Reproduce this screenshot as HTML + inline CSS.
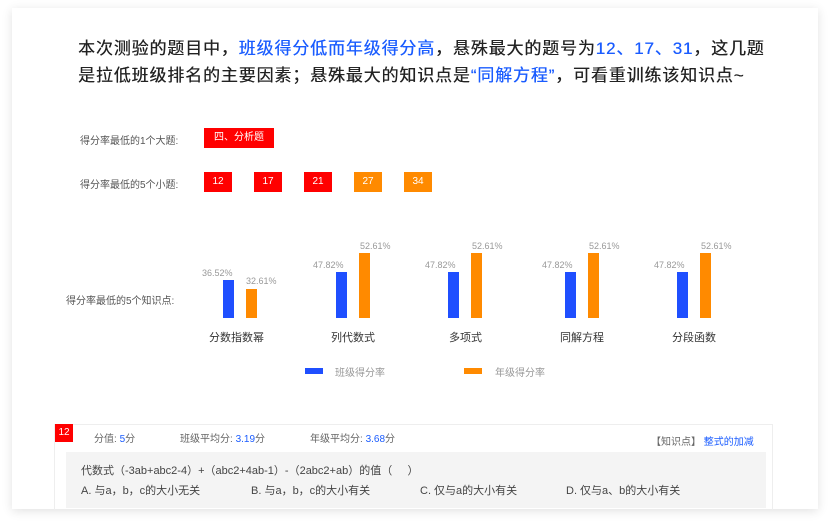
<!DOCTYPE html>
<html><head><meta charset="utf-8"><style>
*{margin:0;padding:0;box-sizing:border-box}
body{width:830px;height:527px;background:#fff;position:relative;overflow:hidden;font-family:"Liberation Sans","Noto Sans CJK SC",sans-serif;color:#333}
.card{position:absolute;left:12px;top:8px;width:806px;height:501px;background:#fff;box-shadow:0 2px 10px rgba(0,0,0,0.12)}
.a{position:absolute;white-space:nowrap}
.h{font-size:17px;color:#222;left:78px;letter-spacing:0.85px;text-shadow:0.3px 0 0 currentColor}
.b{color:#1a5cff}
.lbl{font-size:10px;color:#555}
.tag{position:absolute;height:20px;color:#fff;font-size:10px;line-height:20px;text-align:center}
.r{background:#f00}.o{background:#ff8a00}
.bar{position:absolute;width:11px}
.bl{background:#1f4fff}.or{background:#ff8a00}
.v{position:absolute;font-size:9px;color:#999}
.cat{position:absolute;font-size:11px;color:#333;top:329px}
.g{font-size:10px;color:#666}
</style></head><body>
<div class="card"></div>
<div class="a h" style="top:34px">本次测验的题目中，<span class="b">班级得分低而年级得分高</span>，悬殊最大的题号为<span class="b">12、17、31</span>，这几题</div>
<div class="a h" style="top:61px">是拉低班级排名的主要因素；悬殊最大的知识点是<span class="b">“同解方程”</span>，可看重训练该知识点~</div>

<div class="a lbl" style="left:80px;top:132px">得分率最低的1个大题:</div>
<div class="tag r" style="left:204px;top:128px;width:70px">四、分析题</div>
<div class="a lbl" style="left:80px;top:176px">得分率最低的5个小题:</div>
<div class="tag r" style="left:204px;top:172px;width:28px">12</div>
<div class="tag r" style="left:254px;top:172px;width:28px">17</div>
<div class="tag r" style="left:304px;top:172px;width:28px">21</div>
<div class="tag o" style="left:354px;top:172px;width:28px">27</div>
<div class="tag o" style="left:404px;top:172px;width:28px">34</div>

<div class="a lbl" style="left:66px;top:292px">得分率最低的5个知识点:</div>

<div class="bar bl" style="left:223px;top:280px;height:38px"></div>
<div class="bar or" style="left:246px;top:289px;height:29px"></div>
<div class="v" style="left:202px;top:268px">36.52%</div>
<div class="v" style="left:246px;top:276px">32.61%</div>
<div class="cat" style="left:209px">分数指数幂</div>

<div class="bar bl" style="left:336px;top:272px;height:46px"></div>
<div class="bar or" style="left:359px;top:253px;height:65px"></div>
<div class="v" style="left:313px;top:260px">47.82%</div>
<div class="v" style="left:360px;top:241px">52.61%</div>
<div class="cat" style="left:331px">列代数式</div>

<div class="bar bl" style="left:448px;top:272px;height:46px"></div>
<div class="bar or" style="left:471px;top:253px;height:65px"></div>
<div class="v" style="left:425px;top:260px">47.82%</div>
<div class="v" style="left:472px;top:241px">52.61%</div>
<div class="cat" style="left:449px">多项式</div>

<div class="bar bl" style="left:565px;top:272px;height:46px"></div>
<div class="bar or" style="left:588px;top:253px;height:65px"></div>
<div class="v" style="left:542px;top:260px">47.82%</div>
<div class="v" style="left:589px;top:241px">52.61%</div>
<div class="cat" style="left:560px">同解方程</div>

<div class="bar bl" style="left:677px;top:272px;height:46px"></div>
<div class="bar or" style="left:700px;top:253px;height:65px"></div>
<div class="v" style="left:654px;top:260px">47.82%</div>
<div class="v" style="left:701px;top:241px">52.61%</div>
<div class="cat" style="left:672px">分段函数</div>

<div class="a" style="left:305px;top:368px;width:18px;height:6px;background:#1f4fff"></div>
<div class="a" style="left:335px;top:364px;font-size:10px;color:#999">班级得分率</div>
<div class="a" style="left:464px;top:368px;width:18px;height:6px;background:#ff8a00"></div>
<div class="a" style="left:495px;top:364px;font-size:10px;color:#999">年级得分率</div>

<div class="a" style="left:54px;top:424px;width:719px;height:86px;border:1px solid #eee;border-bottom:none"></div>
<div class="a" style="left:55px;top:424px;width:18px;height:18px;background:#f00;color:#fff;font-size:10px;line-height:18px;text-align:center">12</div>
<div class="a g" style="left:94px;top:430px">分值: <span class="b">5</span>分</div>
<div class="a g" style="left:180px;top:430px">班级平均分: <span class="b">3.19</span>分</div>
<div class="a g" style="left:310px;top:430px">年级平均分: <span class="b">3.68</span>分</div>
<div class="a g" style="left:651px;top:433px">【知识点】 <span class="b">整式的加减</span></div>
<div class="a" style="left:66px;top:452px;width:700px;height:56px;background:#f4f4f4"></div>
<div class="a" style="left:81px;top:462px;font-size:11px;color:#444">代数式（-3ab+abc2-4）+（abc2+4ab-1）-（2abc2+ab）的值（&nbsp;&nbsp;&nbsp;&nbsp;&nbsp;）</div>
<div class="a" style="left:81px;top:482px;font-size:11px;color:#444">A. 与a，b，c的大小无关</div>
<div class="a" style="left:251px;top:482px;font-size:11px;color:#444">B. 与a，b，c的大小有关</div>
<div class="a" style="left:420px;top:482px;font-size:11px;color:#444">C. 仅与a的大小有关</div>
<div class="a" style="left:566px;top:482px;font-size:11px;color:#444">D. 仅与a、b的大小有关</div>
</body></html>
